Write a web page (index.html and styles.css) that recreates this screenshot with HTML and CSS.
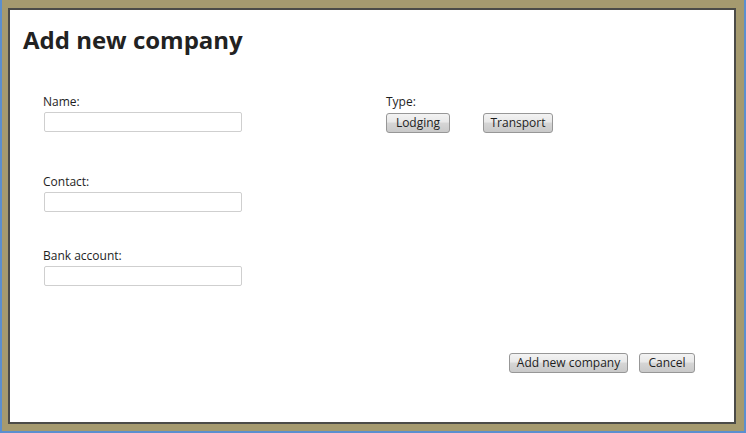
FILE: index.html
```html
<!DOCTYPE html>
<html>
<head>
<meta charset="utf-8">
<link rel="stylesheet" href="styles.css">
</head>
<body>
<div class="frame">
  <div class="panel">
    <h1 class="title">Add new company</h1>
    <div class="form">
      <div class="col">
        <div class="field">
          <label class="label">Name:</label>
          <input class="input" type="text">
        </div>
        <div class="field field-contact">
          <label class="label">Contact:</label>
          <input class="input" type="text">
        </div>
        <div class="field field-bank">
          <label class="label">Bank account:</label>
          <input class="input" type="text">
        </div>
      </div>
      <div class="col">
        <div class="field">
          <label class="label">Type:</label>
          <div class="type-buttons">
            <button class="btn btn-lodging">Lodging</button>
            <button class="btn btn-transport">Transport</button>
          </div>
        </div>
      </div>
    </div>
    <div class="footer">
      <button class="btn btn-add">Add new company</button>
      <button class="btn btn-cancel">Cancel</button>
    </div>
  </div>
</div>
</body>
</html>
```

FILE: styles.css
```css
html, body {
  margin: 0;
  padding: 0;
  width: 746px;
  height: 433px;
  overflow: hidden;
}
body {
  font-family: "Open Sans", "Noto Sans", sans-serif;
  color: #222;
}
.frame {
  box-sizing: border-box;
  width: 746px;
  height: 433px;
  background: #a59a6f;
  border-left: 2px solid #5b8fcf;
  border-right: 2px solid #5b8fcf;
  border-bottom: 2px solid #5b8fcf;
  padding: 8px 8px 7px 6px;
}
.panel {
  box-sizing: border-box;
  height: 100%;
  background: #fff;
  border: 2px solid #4b4b48;
  display: flex;
  flex-direction: column;
}
.title {
  margin: 0;
  padding: 14px 0 0 13px;
  font-size: 24px;
  font-weight: 700;
  line-height: 32px;
  color: #222;
}
.form {
  display: grid;
  grid-template-columns: 343px auto;
  padding: 37px 0 0 33px;
}
.col {
  display: flex;
  flex-direction: column;
}
.field {
  display: flex;
  flex-direction: column;
}
.field-contact { margin-top: 41px; }
.field-bank { margin-top: 35px; }
.label {
  font-size: 12px;
  line-height: 17px;
  color: #1e1e1e;
  margin-bottom: 2px;
}
.input {
  box-sizing: border-box;
  width: 198px;
  height: 20px;
  margin: 0 0 0 1px;
  border: 1px solid #cfcfcf;
  border-radius: 2px;
  background: #fff;
  padding: 0 3px;
  font-family: inherit;
  font-size: 12px;
}
.type-buttons {
  display: flex;
  gap: 33px;
  margin-top: 1px;
}
.btn {
  box-sizing: border-box;
  height: 20px;
  padding: 0;
  border: 1px solid #979797;
  border-radius: 3px;
  background: linear-gradient(to bottom, #f3f3f3 0%, #e8e8e8 45%, #d6d6d6 50%, #c9c9c9 100%);
  font-family: inherit;
  font-size: 12px;
  line-height: 18px;
  color: #1e1e1e;
  text-align: center;
}
.btn-lodging { width: 64px; }
.btn-transport { width: 70px; }
.footer {
  margin-top: auto;
  display: flex;
  justify-content: flex-end;
  gap: 11px;
  padding: 0 39px 49px 0;
}
.btn-add { width: 119px; }
.btn-cancel { width: 56px; }
```
